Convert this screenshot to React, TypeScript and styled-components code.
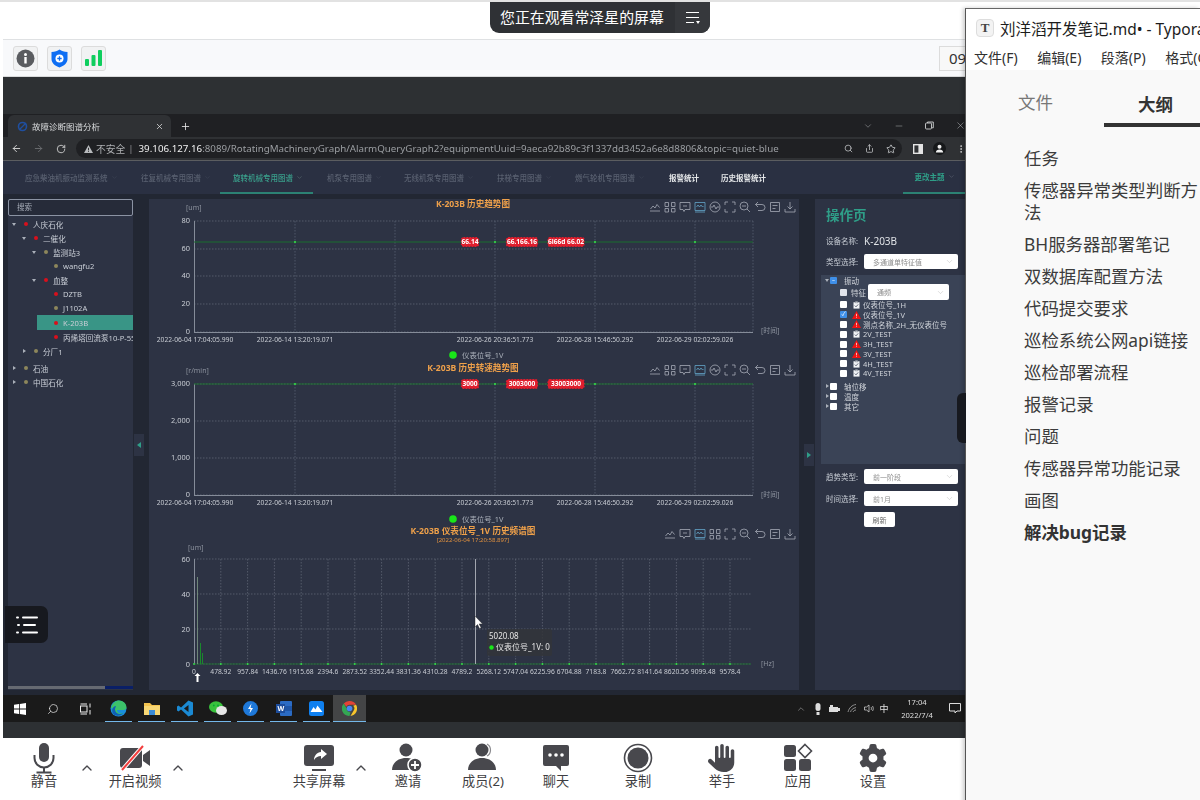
import React from "react";
import styled, { createGlobalStyle } from "styled-components";
import { FaGear, FaHand } from "react-icons/fa6";
import { ArrowLeft, ArrowRight, RotateCw, Search, Share, Star, ChevronDown, ChevronUp, Minus, X, Plus, MoreVertical } from "lucide-react";

const Global = createGlobalStyle`
  html, body { margin: 0; padding: 0; width: 1200px; height: 800px; overflow: hidden; background: #fff; }
  #root { width: 1200px; height: 800px; }
  * { box-sizing: border-box; }
  body { font-family: "Noto Sans", "Noto Sans CJK SC", sans-serif; }
`;

const Page = styled.div`
  position: relative; display: flex; width: 1200px; height: 800px; overflow: hidden;
  border-top: 2px solid #e2e2e2; background: #fff; color: #333;
`;
const Meeting = styled.div`
  width: 966px; height: 798px; display: flex; flex-direction: column; padding-left: 3px; flex: none;
`;
const TopBlank = styled.div`height: 38px; background: #fff; border-bottom: 1px solid #dfe1e3; flex: none;`;
const ControlBar = styled.div`
  height: 37px; flex: none; display: flex; align-items: center; gap: 9px; padding-left: 10px;
  background: #f8f9fb; overflow: hidden; border-bottom: 1px solid #d9dadb;
`;
const StatusBtn = styled.div`
  width: 25px; height: 25px; border: 1px solid #dcdcdc; border-radius: 3px; background: #f1f2f3;
  display: flex; align-items: center; justify-content: center;
`;
const TimeBox = styled.div`
  margin-left: auto; width: 27px; height: 25px; border: 1px solid #dcdcdc; border-right: 0; background: #f8f8f8;
  font-size: 15px; line-height: 23px; padding-left: 9px; color: #333; white-space: nowrap; overflow: hidden;
`;
const Remote = styled.div`
  flex: 1; background: #2d3033; padding-top: 37px; display: flex; flex-direction: column; min-height: 0; overflow: hidden; filter: blur(0.25px);
`;
const TabStrip = styled.div`height: 23px; background: #1f2023; display: flex; align-items: flex-end; flex: none; padding-left: 5px; color: #e8e8e8;`;
const BrowserTab = styled.div`
  width: 163px; height: 22px; background: #2f3134; border-radius: 6px 6px 0 0; display: flex; align-items: center;
  padding: 0 7px 0 9px; font-size: 8.5px; color: #d8dadc; flex: none;
`;
const TabTitle = styled.span`margin-left: 4px; flex: 1; white-space: nowrap;`;
const NewTab = styled.div`width: 28px; height: 22px; display: flex; align-items: center; justify-content: center;`;
const WinControls = styled.div`margin-left: auto; display: flex; gap: 20px; height: 23px; align-items: center; color: #cfd1d3;`;
const WinBtn = styled.div`width: 11px; display: flex; justify-content: center;`;
const AddressBar = styled.div`
  height: 24px; background: #2f3134; display: flex; align-items: center; flex: none; color: #c8cacc; border-bottom: 1px solid #5b5d60;
`;
const NavBtn = styled.div<{ $first?: boolean }>`width: 22px; margin-left: ${(p) => (p.$first ? "3px" : "0")}; display: flex; justify-content: center;`;
const Omnibox = styled.div`
  width: 827px; height: 19px; margin-left: 4px; background: #1f2023; border-radius: 10px; display: flex; align-items: center;
  padding: 0 5px 0 8px; font-size: 9.75px; white-space: nowrap; overflow: hidden; color: #9b9ea2;
`;
const UnsafeText = styled.span`margin-left: 3px; color: #aeb0b3;`;
const UnsafeBar = styled.span`margin: 0 5px 0 3px; color: #8a8c8f;`;
const Host = styled.span`color: #f0f0f0;`;
const OmniIcons = styled.div`margin-left: auto; display: flex; gap: 12px; padding-right: 1px; color: #c8cacc;`;
const ChromeIcons = styled.div`display: flex; align-items: center; gap: 10px; margin-left: 11px;`;
const Avatar = styled.div`width: 13px; height: 13px; border-radius: 50%; background: #16181a; display: flex; align-items: center; justify-content: center;`;
const AppNav = styled.div`
  height: 33px; background: #2a3042; display: flex; align-items: stretch; flex: none; padding-left: 19px;
`;
const NavItem = styled.div<{ $active?: boolean; $white?: boolean; $w: number }>`
  width: ${(p) => p.$w}px; flex: none; display: flex; align-items: center; gap: 3px; font-size: 7.5px; font-weight: ${(p) => (p.$white ? 700 : 500)};
  white-space: nowrap; padding-left: 3px; height: 33px;
  color: ${(p) => (p.$white ? "#e6e8ea" : p.$active ? "#3aa08c" : "#596070")};
`;
const ActiveWrap = styled.div`
  position: relative; display: flex;
  &::after { content: ""; position: absolute; left: -10px; width: 93px; bottom: 0; height: 2px; background: #2c8274; }
`;
const ThemeNav = styled.div`
  margin-left: auto; width: 63px; display: flex; align-items: center; justify-content: center; gap: 3px; font-size: 7.5px; font-weight: 600;
  color: #2f9e88; border-bottom: 2px solid #2c8274; white-space: nowrap;
`;
const Body = styled.div`
  height: 501px; flex: none; background: #222733; display: flex; padding: 5px 0 5px 5px;
`;
const Sidebar = styled.div`width: 125px; background: #2d3344; display: flex; flex-direction: column; flex: none; overflow: hidden;`;
const SearchBox = styled.div`
  height: 17px; border: 1px solid #8b93a3; border-radius: 2px; font-size: 7.5px; line-height: 15px; padding-left: 8px; color: #a5abb6; flex: none; background: #262b39;
`;
const Tree = styled.div`flex: 1; padding-top: 1px; min-height: 0;`;
const TreeRow = styled.div<{ $depth: number; $sel?: boolean; $gap?: boolean }>`
  height: ${(p) => (p.$sel ? 15 : 14)}px; margin-left: ${(p) => p.$depth * 10 - (p.$sel ? 1 : 0)}px; margin-top: ${(p) => (p.$gap ? 3 : 0)}px;
  padding-left: ${(p) => (p.$sel ? 4 : 3)}px; display: flex; align-items: center; white-space: nowrap; font-size: 7.6px; color: #c9ced6;
  background: ${(p) => (p.$sel ? "#399586" : "transparent")}; overflow: hidden;
`;
const Arrow = styled.span<{ $open?: boolean; $none?: boolean }>`
  width: 6px; height: 6px; flex: none; display: flex; align-items: center; justify-content: center;
  &::before { content: ""; display: ${(p) => (p.$none ? "none" : "block")}; border-style: solid;
    border-width: ${(p) => (p.$open ? "3px 2.2px 0 2.2px" : "2.2px 0 2.2px 3px")};
    border-color: ${(p) => (p.$open ? "#aab0ba transparent transparent transparent" : "transparent transparent transparent #aab0ba")}; }
`;
const Dot = styled.span<{ $red?: boolean }>`
  width: 4px; height: 4px; border-radius: 50%; flex: none; margin: 0 5px 0 7px; background: ${(p) => (p.$red ? "#d9101c" : "#8d875c")};
`;
const ScrollTrack = styled.div`height: 3px; display: flex; margin-bottom: 1px; flex: none; background: #0a1f66;`;
const ScrollThumb = styled.div`width: 97px; background: #666a72;`;
const CollapseHandle = styled.div<{ $top: number; $ml: number; $mr: number }>`
  width: 10px; height: 22px; margin: ${(p) => p.$top}px ${(p) => p.$mr}px 0 ${(p) => p.$ml}px; background: #2d3344; flex: none;
  display: flex; align-items: center; justify-content: center;
`;
const ChartPanel = styled.div`width: 650px; background: #2d3344; flex: none; display: flex; flex-direction: column;`;
const ChartSvg = styled.svg`display: block; flex: none;`;
const AxisText = styled.text`font-size: 6.7px; fill: #c8ccd3;`;
const TickText = styled.text`font-size: 7.4px; fill: #c8ccd3;`;
const UnitText = styled.text`font-size: 7px; fill: #8b919d;`;
const TitleText = styled.text`font-size: 8.6px; font-weight: 700; fill: #eea04a;`;
const SubTitle = styled.text`font-size: 6px; fill: #e0903f;`;
const LegendText = styled.text`font-size: 7.4px; fill: #aab0ba;`;
const MarkText = styled.text`font-size: 6.6px; font-weight: 700; fill: #fff;`;
const TipText = styled.text`font-size: 8px; fill: #e6e6e6;`;

const OpsPanel = styled.div`width: 151px; background: #2d3344; flex: none; padding: 9px 0 0 11px; display: flex; flex-direction: column;`;
const OpsTitle = styled.div`font-size: 13.5px; line-height: 14px; height: 14px; font-weight: 700; color: #2f9e88; margin-bottom: 11px;`;
const FieldRow = styled.div<{ $mb?: number }>`display: flex; align-items: center; height: 15px; margin-bottom: ${(p) => p.$mb ?? 0}px; flex: none;`;
const FieldLabel = styled.span`width: 38px; font-size: 7.5px; color: #c6cbd3; white-space: nowrap; flex: none;`;
const FieldValue = styled.span`font-size: 10px; color: #dfe2e6;`;
const SelectBox = styled.div<{ $w: number; $h?: number; $ml?: number }>`
  width: ${(p) => p.$w}px; height: ${(p) => p.$h ?? 15}px; margin-left: ${(p) => p.$ml ?? 0}px; background: #fff; border-radius: 2px; display: flex; align-items: center; justify-content: space-between;
  padding: 0 4px 0 9px; font-size: 7px; color: #8e8e8e; flex: none;
`;
const CheckPanel = styled.div`
  height: 189px; margin: 6px 0 5px -5px; background: #3a4356; padding-left: 3px; flex: none; font-size: 7.5px; color: #c6cbd3; white-space: nowrap; overflow: hidden;
`;
const CheckRow = styled.div<{ $indent?: number; $h?: number; $mt?: number }>`
  display: flex; align-items: center; height: ${(p) => p.$h ?? 10}px; margin-top: ${(p) => p.$mt ?? 0}px; padding-left: ${(p) => p.$indent ?? 0}px;
`;
const Box = styled.span<{ $state?: "on" | "half" | "off" | "dis" }>`
  width: 7px; height: 7px; flex: none; border-radius: 1px; display: flex; align-items: center; justify-content: center; font-size: 6px; line-height: 7px; color: #fff;
  background: ${(p) => (p.$state === "on" || p.$state === "half" ? "#3f8fe8" : p.$state === "dis" ? "#dfe3ea" : "#fff")};
`;
const CheckLabel = styled.span<{ $ml: number }>`margin-left: ${(p) => p.$ml}px; color: #d0d4da;`;
const ChanIcon = styled.span`width: 9px; height: 9px; margin-left: 5px; flex: none; display: flex; align-items: center; justify-content: center;`;
const RefreshBtn = styled.div`
  width: 31px; height: 15px; margin: 6px 0 0 38px; background: #fff; border-radius: 2px; font-size: 7px; color: #666; display: flex; align-items: center; justify-content: center;
`;
const Taskbar = styled.div`height: 27px; flex: none; background: #1a1a1a; display: flex; align-items: stretch; color: #e4e4e4;`;
const TaskSlot = styled.div<{ $active?: boolean; $open?: boolean }>`
  width: 33px; position: relative; flex: none; display: flex; align-items: center; justify-content: center;
  background: ${(p) => (p.$active ? "#444546" : "transparent")};
  &::after { content: ""; display: ${(p) => (p.$open ? "block" : "none")}; position: absolute; bottom: 0; height: 1px; left: ${(p) => (p.$active ? 0 : 3)}px; right: ${(p) => (p.$active ? 0 : 3)}px; background: #74b8ea; }
`;
const TaskSearch = styled(Search)`transform: scaleX(-1);`;
const Tray = styled.div`margin-left: auto; display: flex; align-items: center;`;
const TraySlot = styled.div<{ $w?: number }>`width: ${(p) => p.$w ?? 17}px; display: flex; justify-content: center; align-items: center; font-size: 9px; color: #e2e2e2;`;
const Clock = styled.div`width: 52px; text-align: center; font-size: 7.6px; line-height: 13px; color: #dedede;`;
const BottomGap = styled.div`height: 16px; flex: none;`;
const BottomBar = styled.div`height: 62px; flex: none; background: #fff; display: flex; align-items: flex-start; padding-top: 4px; margin-left: -3px; padding-left: 14px;`;
const ToolItem = styled.div<{ $w: number; $ml: number }>`
  width: ${(p) => p.$w}px; margin-left: ${(p) => p.$ml}px; flex: none; display: flex; flex-direction: column; align-items: center; white-space: nowrap;
  font-size: 13.2px; line-height: 16px; color: #3e3e42;
`;
const ToolIcon = styled.div`height: 32px; display: flex; align-items: center; justify-content: center; margin-bottom: -1px; color: #48484d;`;
const ToolCaret = styled.div<{ $ml: number }>`width: 16px; margin: 17px 0 0 ${(p) => p.$ml}px; flex: none; color: #48484d; display: flex; justify-content: center;`;

const Typora = styled.div`
  width: 235px; height: 800px; margin: 6px 0 0 -1px; border-left: 1px solid #555; border-top: 1px solid #666; background: #fff; flex: none; display: flex; flex-direction: column;
  box-shadow: -2px 0 4px rgba(0,0,0,.2); overflow: hidden; position: relative;
`;
const TyTitleBar = styled.div`height: 38px; display: flex; align-items: center; padding-left: 10px; flex: none; white-space: nowrap; font-size: 15.5px; color: #1c1c1c;`;
const TyLogo = styled.div`
  width: 18px; height: 18px; border: 1px solid #ddd; border-radius: 4px; background: #f3f3f3; margin-right: 6px; flex: none; font-family: "Liberation Serif", serif; font-weight: 700;
  font-size: 13px; line-height: 16px; text-align: center; color: #444;
`;
const TyMenu = styled.div`height: 23px; display: flex; gap: 19.5px; padding-left: 8px; flex: none; white-space: nowrap; font-size: 14px; line-height: 22px; color: #303030; background: #fff;`;
const TyBody = styled.div`flex: 1; background: #f9f9f9;`;
const TyTabs = styled.div`height: 57px; display: flex; position: relative;`;
const TyTab = styled.div<{ $active?: boolean }>`
  width: ${(p) => (p.$active ? 96 : 138)}px; height: 57px; padding-top: ${(p) => (p.$active ? 22 : 20)}px; padding-left: ${(p) => (p.$active ? 34 : 52)}px; font-size: 17.5px; line-height: 24px;
  color: ${(p) => (p.$active ? "#333" : "#777")}; font-weight: ${(p) => (p.$active ? 700 : 400)};
  border-bottom: ${(p) => (p.$active ? "4px solid #333" : "0")};
`;
const Outline = styled.div`padding: 20px 0 0 58px; width: 234px;`;
const OutlineItem = styled.div<{ $bold?: boolean }>`
  font-size: 17.4px; line-height: 22px; margin-bottom: 10px; color: ${(p) => (p.$bold ? "#333" : "#3c3c3c")}; font-weight: ${(p) => (p.$bold ? 700 : 400)};
`;
const Banner = styled.div`
  position: absolute; left: 490px; top: -1px; width: 220px; height: 32px; background: #2f3135; border-radius: 0 0 9px 9px; display: flex; color: #fff; font-size: 14.9px; overflow: hidden; z-index: 3;
`;
const BannerText = styled.div`width: 185px; padding-left: 10px; line-height: 33px; white-space: nowrap;`;
const BannerMenu = styled.div`flex: 1; background: #36383c; display: flex; align-items: center; justify-content: center;`;
const FloatBtn = styled.div`
  position: absolute; left: 5px; top: 604px; width: 43px; height: 37px; background: #17191f; border-radius: 0 7px 7px 0; display: flex; align-items: center; justify-content: center; z-index: 2;
`;
const SideGrip = styled.div`position: absolute; left: 957px; top: 391px; width: 9px; height: 50px; background: #17191f; border-radius: 6px 0 0 6px; z-index: 2;`;

const TOOL_GLYPHS: Record<string, string> = {
  line: "M1 10h10M1.5 8l2.5-3 2 2 2-3.5 2.5 3",
  swap: "M1 1.5h3.5v4H1zM7.5 1.5H11v4H7.5zM1 7.5h3.5v3.5H1zM7.5 7.5H11v3.5H7.5z",
  note: "M1 1.5h10v7H6l-1 2-1-2H1zM4 5h4",
  wave: "M1 1.5h10v8H1zM2.5 6l1.5-2 1.5 2 1.5-2 1.5 2 1-1M1 11h10",
  dial: "M6 1a5 5 0 1 1 0 10a5 5 0 1 1 0-10M2 6h2l1-2 2 4 1-2h2",
  full: "M1 4V1h3M8 1h3v3M11 8v3H8M4 11H1V8",
  zoom: "M5 1a4 4 0 1 1 0 8a4 4 0 1 1 0-8M8 8l3 3M3 5h4",
  back: "M4 1L1.5 3.5 4 6M1.5 3.5H8a3 3 0 0 1 0 6H4",
  box: "M1.5 1.5h9v9h-9zM3.5 4.5h5M3.5 7.5h3",
  down: "M6 1v7M3.5 5.5L6 8l2.5-2.5M1 8v3h10V8",
};
function Toolbox({ y, names, start }: { y: number; names: string[]; start: number }) {
  return (
    <g fill="none" stroke="#a4aab5" strokeWidth={0.8}>
      {names.map((n, i) => (
        <path key={i} transform={`translate(${start + i * 15 - 6} ${y - 6})`} d={TOOL_GLYPHS[n]} stroke={n === "wave" ? "#62a4c8" : undefined} />
      ))}
    </g>
  );
}
const TB_A = ["line", "swap", "note", "wave", "dial", "full", "zoom", "back", "box", "down"];
const TB_B = ["line", "note", "wave", "swap", "full", "zoom", "back", "box", "down"];

function Mark({ x, y, w, text }: { x: number; y: number; w: number; text: string }) {
  return (
    <g>
      <rect x={x - w / 2} y={y - 4.5} width={w} height={9} rx={2} fill="#e01e2d" stroke="#e01e2d" strokeWidth={1.2} strokeDasharray="1.5 1.5" />
      <MarkText x={x} y={y + 2.4} textAnchor="middle">{text}</MarkText>
    </g>
  );
}

const TREND_LABELS: [number, string][] = [
  [195, "2022-06-04 17:04:05.990"],
  [295, "2022-06-14 13:20:19.071"],
  [495, "2022-06-26 20:36:51.773"],
  [595, "2022-06-28 15:46:50.292"],
  [695, "2022-06-29 02:02:59.026"],
];
const GRIDX = [295, 395, 495, 595, 695, 753];

function TrendChart(props: {
  top: number; height: number; title: string; titleY: number; unit: string; unitY: number;
  ticks: [number, string][]; lineY: number; bottom: number; toolY: number; marks: [number, number, string][]; legendY: number; timeY: number;
}) {
  const { top, height, title, titleY, unit, unitY, ticks, lineY, bottom, toolY, marks, legendY, timeY } = props;
  return (
    <ChartSvg width={650} height={height} viewBox={`149 ${top} 650 ${height}`}>
      <TitleText x={473} y={titleY + 3} textAnchor="middle">{title}</TitleText>
      <Toolbox y={toolY} names={TB_A} start={655} />
      <UnitText x={186} y={unitY + 2}>{unit}</UnitText>
      {ticks.map(([y, t]) => (
        <g key={t}>
          <line x1={194} x2={753} y1={y} y2={y} stroke="#5d6474" strokeWidth={0.8} strokeDasharray="1.5 1.5" />
          <TickText x={190} y={y + 2} textAnchor="end">{t}</TickText>
        </g>
      ))}
      {GRIDX.map((x) => (
        <line key={x} x1={x} x2={x} y1={ticks[0][0]} y2={bottom} stroke="#566072" strokeWidth={0.8} strokeDasharray="1.5 1.5" />
      ))}
      <line x1={194.5} x2={194.5} y1={ticks[0][0]} y2={bottom} stroke="#858c99" />
      <line x1={194} x2={753} y1={bottom + 0.5} y2={bottom + 0.5} stroke="#858c99" />
      <line x1={194} x2={753} y1={lineY} y2={lineY} stroke="#1b6e2e" strokeWidth={1.2} />
      {[295, 495, 595, 695].map((x) => <circle key={x} cx={x} cy={lineY} r={1} fill="#37e24a" />)}
      {marks.map(([x, w, t]) => <Mark key={x} x={x} y={lineY} w={w} text={t} />)}
      {TREND_LABELS.map(([x, t]) => <AxisText key={x} x={x} y={bottom + 9.5} textAnchor="middle">{t}</AxisText>)}
      <UnitText x={761} y={timeY + 2.5}>[时间]</UnitText>
      <circle cx={453} cy={legendY} r={3.8} fill="#19e619" />
      <LegendText x={462} y={legendY + 2.5}>仪表位号_1V</LegendText>
    </ChartSvg>
  );
}

const SPEC = ["478.92","957.84","1436.76","1915.68","2394.6","2873.52","3352.44","3831.36","4310.28","4789.2","5268.12","5747.04","6225.96","6704.88","7183.8","7662.72","8141.64","8620.56","9099.48","9578.4"];
function SpectrumChart() {
  const xs = Array.from({ length: 21 }, (_, i) => 194 + i * 26.8);
  return (
    <ChartSvg width={650} height={165} viewBox="149 525 650 165">
      <TitleText x={473} y={534.5} textAnchor="middle">K-203B 仪表位号_1V 历史频谱图</TitleText>
      <SubTitle x={473} y={542.5} textAnchor="middle">[2022-06-04 17:20:58.897]</SubTitle>
      <Toolbox y={535} names={TB_B} start={670} />
      <UnitText x={188} y={551}>[um]</UnitText>
      {([[560,"60"],[595,"40"],[630,"20"],[665,"0"]] as [number,string][]).map(([y,t]) => (
        <g key={t}>
          <line x1={194} x2={751} y1={y} y2={y} stroke="#5d6474" strokeWidth={0.8} strokeDasharray="1.5 1.5" />
          <TickText x={190} y={y + 2.5} textAnchor="end">{t}</TickText>
        </g>
      ))}
      {xs.slice(1).map((x) => <line key={x} x1={x} x2={x} y1={560} y2={665} stroke="#5d6474" strokeWidth={0.8} strokeDasharray="1.5 1.5" />)}
      <line x1={194.5} x2={194.5} y1={560} y2={665} stroke="#858c99" />
      <line x1={194} x2={751} y1={665} y2={665} stroke="#1c6a30" strokeWidth={1.2} />
      {xs.map((x) => <circle key={x} cx={x} cy={665} r={0.9} fill="#37e24a" />)}
      <line x1={197.5} x2={197.5} y1={578} y2={665} stroke="#7f9a85" strokeWidth={0.8} />
      <line x1={200.5} x2={200.5} y1={644} y2={665} stroke="#1a8a2c" />
      <line x1={202.5} x2={202.5} y1={654} y2={665} stroke="#1a8a2c" />
      <AxisText x={194} y={675} textAnchor="middle">0</AxisText>
      {SPEC.map((t, i) => <AxisText key={t} x={xs[i + 1]} y={675} textAnchor="middle">{t}</AxisText>)}
      <UnitText x={761} y={667}>[Hz]</UnitText>
      <line x1={475.5} x2={475.5} y1={560} y2={665} stroke="#c0c4ca" strokeWidth={0.8} />
      <path d="M475 617v11l2.500-2.500 2 4 1.600-.8-2-3.800h3.400z" fill="#fff" stroke="#222" strokeWidth={0.4} />
      <rect x={487} y={630} width={65} height={27} rx={2} fill="#32353a" opacity={0.85} />
      <TipText x={489} y={640}>5020.08</TipText>
      <circle cx={491.5} cy={648.5} r={2.2} fill="#19e619" />
      <TipText x={496} y={651}>仪表位号_1V: 0</TipText>
      <path d="M197.5 674l-3 3h2v6h2v-6h2z" fill="#fff" />
    </ChartSvg>
  );
}

const TREE: { d: number; t: string; open?: boolean; leaf?: boolean; red?: boolean; sel?: boolean; gap?: boolean }[] = [
  { d: 0, t: "人庆石化", open: true, red: true },
  { d: 1, t: "二催化", open: true, red: true },
  { d: 2, t: "监测站3", open: true },
  { d: 3, t: "wangfu2", leaf: true },
  { d: 2, t: "血整", open: true, red: true },
  { d: 3, t: "DZTB", leaf: true, red: true },
  { d: 3, t: "J1102A", leaf: true },
  { d: 3, t: "K-203B", leaf: true, red: true, sel: true },
  { d: 3, t: "丙烯塔回流泵10-P-557", leaf: true, red: true },
  { d: 1, t: "分厂1" },
  { d: 0, t: "石油", gap: true },
  { d: 0, t: "中国石化" },
];

const Warn = () => (
  <svg width="9" height="8" viewBox="0 0 9 8"><path d="M4.500 0L9 8H0z" fill="#f01414" /><path d="M4.500 2.800v2.400M4.500 5.800v.9" stroke="#fff" strokeWidth=".7" /></svg>
);
const Clip = () => (
  <svg width="7" height="8" viewBox="0 0 7 8"><path d="M.5 1.200h6v6.400h-6z" fill="#f2f4f7" /><path d="M2.200.4h2.600v1.400H2.200z" fill="#f2f4f7" stroke="#3a4356" strokeWidth=".4" /><path d="M1.800 4.600l1.200 1.200L5.200 3.400" stroke="#3a4356" fill="none" strokeWidth=".8" /></svg>
);
const CHANNELS: [string, "warn" | "clip", boolean][] = [
  ["仪表位号_1H", "clip", false], ["仪表位号_1V", "warn", true], ["测点名称_2H_无仪表位号", "warn", false], ["2V_TEST", "clip", false],
  ["3H_TEST", "warn", false], ["3V_TEST", "warn", false], ["4H_TEST", "clip", false], ["4V_TEST", "clip", false],
];
const SmallChevron = () => <ChevronDown size={9} color="#b8b8b8" strokeWidth={1.2} />;
const NavChevron = ({ c }: { c?: string }) => <ChevronDown size={7} color={c ?? "#464c5c"} strokeWidth={1.4} />;

const MicIcon = () => (
  <svg width="32" height="32" viewBox="0 0 32 32"><rect x="11" y="1" width="10" height="19" rx="5" fill="#48484d" /><path d="M6.500 13v3a9.500 9.500 0 0 0 19 0v-3" fill="none" stroke="#48484d" strokeWidth="2" /><path d="M16 26v4M8.500 30.500h15" stroke="#48484d" strokeWidth="2" /></svg>
);
const VideoOffIcon = () => (
  <svg width="32" height="26" viewBox="0 0 32 26"><rect x="1" y="3" width="22" height="20" rx="3" fill="#48484d" /><path d="M24 10l7-5v16l-7-5z" fill="#48484d" /><path d="M3 25L24 1" stroke="#fff" strokeWidth="4" /><path d="M3 25L24 1" stroke="#f23d3d" strokeWidth="2" /></svg>
);
const ShareIcon = () => (
  <svg width="32" height="28" viewBox="0 0 32 28"><rect x="1" y="1" width="30" height="21" rx="3" fill="#48484d" /><path d="M18 5l6 5-6 5v-3c-3 0-5 1-7 4 0-4 3-8 7-8z" fill="#fff" /><rect x="9" y="25" width="14" height="2" fill="#48484d" /></svg>
);
const InviteIcon = () => (
  <svg width="34" height="32" viewBox="0 0 34 32"><circle cx="15" cy="8" r="6.500" fill="#48484d" /><path d="M1 28c0-7 6-12 14-12 5 0 9 2 11 5v7z" fill="#48484d" /><circle cx="24" cy="23" r="7" fill="#48484d" stroke="#fff" strokeWidth="1.500" /><path d="M24 19v8M20 23h8" stroke="#fff" strokeWidth="1.800" /></svg>
);
const MembersIcon = () => (
  <svg width="32" height="32" viewBox="0 0 32 32"><circle cx="15" cy="8" r="6.500" fill="#48484d" /><path d="M20 2c2 1 3.500 3 3.500 6s-1.500 5-3.500 6" fill="none" stroke="#8a8a8e" strokeWidth="1.200" /><path d="M1 28c0-7 6-12 14-12s14 5 14 12z" fill="#48484d" /></svg>
);
const ChatIcon = () => (
  <svg width="28" height="28" viewBox="0 0 28 28"><path d="M3 1h22a2 2 0 0 1 2 2v17a2 2 0 0 1-2 2h-6v5l-5-5H3a2 2 0 0 1-2-2V3a2 2 0 0 1 2-2z" fill="#48484d" /><circle cx="8" cy="11" r="1.800" fill="#fff" /><circle cx="14" cy="11" r="1.800" fill="#fff" /><circle cx="20" cy="11" r="1.800" fill="#fff" /></svg>
);
const RecordIcon = () => (
  <svg width="30" height="30" viewBox="0 0 30 30"><circle cx="15" cy="15" r="13.500" fill="none" stroke="#48484d" strokeWidth="1.600" /><circle cx="15" cy="15" r="10.500" fill="#48484d" /></svg>
);
const AppsIcon = () => (
  <svg width="30" height="30" viewBox="0 0 30 30"><rect x="1" y="2" width="12" height="12" rx="2.500" fill="#48484d" /><rect x="1" y="16" width="12" height="12" rx="2.500" fill="#48484d" /><rect x="16" y="16" width="12" height="12" rx="2.500" fill="#48484d" /><path d="M22 1.500l6.500 6.500-6.500 6.500L15.500 8z" fill="none" stroke="#48484d" strokeWidth="1.600" /></svg>
);
const Caret = () => <ChevronUp size={18} strokeWidth={2} />;

const WinLogo = () => <svg width="12" height="12" viewBox="0 0 12 12" fill="#fff"><path d="M0 1.700l5-.7v4.600H0zM5.800.9L12 0v5.600H5.800zM0 6.400h5V11l-5-.7zM5.800 6.400H12V12l-6.200-.9z" /></svg>;
const TaskView = () => <svg width="12" height="12" viewBox="0 0 12 12" fill="none" stroke="#eee"><rect x=".5" y="3" width="6.500" height="6" /><path d="M.5 1h6.500M.5 11h6.500M10 .5v4M10 7v4.500" /></svg>;
const Edge = () => <svg width="17" height="17" viewBox="0 0 17 17"><circle cx="8.500" cy="8.500" r="8" fill="#1a8fdc" /><path d="M1 8C2 3 6 .5 9 .5c4 0 7.500 3 7.500 7 0 2-2 2.500-4 2.500H7c0 3 3 4 6 3-2 3-8 3-10-1C1 10 3 5 7 6 5 7 5 8 5 8z" fill="#3cc26a" /><path d="M5 9c0 4 4 6 8 4.500-3 3-8 3-10 0C1 10 3 6 6 6z" fill="#0f5fb5" /></svg>;
const Explorer = () => <svg width="16" height="14" viewBox="0 0 16 14"><path d="M0 1h6l2 2h8v10H0z" fill="#f3c34f" /><rect y="4" width="16" height="9" fill="#f7d775" /><rect x="5" y="8" width="6" height="5" fill="#3b8bd6" /></svg>;
const VSCode = () => <svg width="16" height="17" viewBox="0 0 16 17"><path d="M11.500.500L16 2.500v12l-4.500 2L4 9.500 1.500 11.500 0 10.500v-4L1.500 5.500 4 7.500z" fill="#1b8ad3" /><path d="M11.500 5L7 8.500l4.500 3.500z" fill="#1a1a1a" /></svg>;
const WeChat = () => <svg width="18" height="15" viewBox="0 0 18 15"><ellipse cx="7" cy="6" rx="7" ry="5.800" fill="#39c23c" /><ellipse cx="12.500" cy="9.500" rx="5.500" ry="4.500" fill="#e6e6e6" /><circle cx="4.800" cy="4.500" r=".9" fill="#0a3" /><circle cx="9" cy="4.500" r=".9" fill="#0a3" /></svg>;
const BoltApp = () => <svg width="15" height="15" viewBox="0 0 15 15"><circle cx="7.500" cy="7.500" r="7.500" fill="#1e78d8" /><path d="M8.500 2.500L5 8h2.500L6.500 12.500 10 7H7.500z" fill="#fff" /></svg>;
const Word = () => <svg width="16" height="15" viewBox="0 0 16 15"><rect x="4" width="12" height="15" rx="1" fill="#2b6bc4" /><rect x="4" y="5" width="12" height="5" fill="#1f55a6" /><rect y="3" width="9" height="9" fill="#1d4d9c" /><text x="1.500" y="10" fontSize="7" fontWeight="700" fill="#fff">W</text></svg>;
const LarkApp = () => <svg width="15" height="15" viewBox="0 0 15 15"><rect width="15" height="15" rx="2.500" fill="#0f80f0" /><path d="M1.500 11l3-5 2 2.500 2-4 5 6.500z" fill="#fff" /></svg>;
const Chrome = () => <svg width="15" height="15" viewBox="0 0 16 16"><path d="M8 0a8 8 0 0 1 7 4H8a4 4 0 0 0-3.500 2L1.900 2.600A8 8 0 0 1 8 0z" fill="#e44335" /><path d="M15 4a8 8 0 0 1-6 12l3.500-6A4 4 0 0 0 12 5z" fill="#f8c52c" /><path d="M1.900 2.600L5 8a4 4 0 0 0 4 4l-1 4A8 8 0 0 1 1.900 2.600z" fill="#34a753" /><circle cx="8" cy="8" r="3" fill="#4788f4" /></svg>;

const NAV = [
  { t: "应急柴油机振动监测系统", w: 116 }, { t: "往复机械专用图谱", w: 92 }, { t: "旋转机械专用图谱", w: 94, active: true }, { t: "机泵专用图谱", w: 77 },
  { t: "无线机泵专用图谱", w: 93 }, { t: "扶梯专用图谱", w: 78 }, { t: "燃气轮机专用图谱", w: 94 },
];
const OUTLINE = ["任务", "传感器异常类型判断方法", "BH服务器部署笔记", "双数据库配置方法", "代码提交要求", "巡检系统公网api链接", "巡检部署流程", "报警记录", "问题", "传感器异常功能记录", "画图"];

export default function App() {
  return (
    <>
      <Global />
      <Page>
        <Meeting>
          <TopBlank />
          <ControlBar>
            <StatusBtn>
              <svg width="19" height="19" viewBox="0 0 19 19"><circle cx="9.500" cy="9.500" r="9" fill="#5a5c60" /><rect x="8.300" y="8" width="2.400" height="6.500" fill="#fff" /><circle cx="9.500" cy="5.500" r="1.500" fill="#fff" /></svg>
            </StatusBtn>
            <StatusBtn>
              <svg width="17" height="19" viewBox="0 0 17 19"><path d="M8.500.5c2 1.500 4.500 2.300 8 2.500v7c0 4-3.500 7-8 8.500-4.500-1.500-8-4.500-8-8.500V3c3.500-.2 6-1 8-2.500z" fill="#0e6ef3" /><circle cx="8.500" cy="9.500" r="4" fill="#fff" /><path d="M8.500 7.300v4.400M6.300 9.500h4.400" stroke="#0e6ef3" strokeWidth="1.300" /></svg>
            </StatusBtn>
            <StatusBtn>
              <svg width="17" height="17" viewBox="0 0 17 17" fill="#0fce5e"><rect x="0" y="9" width="4" height="7" rx="1" /><rect x="6.500" y="5" width="4" height="11" rx="1" /><rect x="13" y="0" width="4" height="16" rx="1" /></svg>
            </StatusBtn>
            <TimeBox>09</TimeBox>
          </ControlBar>
          <Remote>
            <TabStrip>
              <BrowserTab>
                <svg width="11" height="11" viewBox="0 0 11 11" fill="none"><circle cx="5.500" cy="5.500" r="4" stroke="#1f4fa0" strokeWidth="1.600" /><path d="M2 9l7-7" stroke="#1f4fa0" strokeWidth="1.200" /></svg>
                <TabTitle>故障诊断图谱分析</TabTitle>
                <X size={9} strokeWidth={2} color="#e0e0e0" />
              </BrowserTab>
              <NewTab><Plus size={11} strokeWidth={1.8} /></NewTab>
              <WinControls>
                <WinBtn><ChevronDown size={10} strokeWidth={1} /></WinBtn>
                <WinBtn><Minus size={10} strokeWidth={1} /></WinBtn>
                <WinBtn>
                  <svg width="9" height="9" viewBox="0 0 9 9" fill="none" stroke="#cfd1d3" strokeWidth=".9"><rect x=".5" y="2" width="6" height="6" rx="1" /><path d="M2.500 2V1h5.800v5.800H7" /></svg>
                </WinBtn>
                <WinBtn><X size={11} strokeWidth={1} /></WinBtn>
              </WinControls>
            </TabStrip>
            <AddressBar>
              <NavBtn $first><ArrowLeft size={11} color="#d8d8d8" strokeWidth={2} /></NavBtn>
              <NavBtn><ArrowRight size={11} color="#6c6e72" strokeWidth={2} /></NavBtn>
              <NavBtn><RotateCw size={10} color="#d8d8d8" strokeWidth={2} /></NavBtn>
              <Omnibox>
                <svg width="9" height="8" viewBox="0 0 9 8"><path d="M4.500 0L9 8H0z" fill="#b8babd" /><path d="M4.500 2.800v2.400M4.500 5.800v1" stroke="#1f2023" strokeWidth=".9" /></svg>
                <UnsafeText>不安全</UnsafeText><UnsafeBar>|</UnsafeBar>
                <Host>39.106.127.16</Host>:8089/RotatingMachineryGraph/AlarmQueryGraph2?equipmentUuid=9aeca92b89c3f1337dd3452a6e8d8806&amp;topic=quiet-blue
                <OmniIcons>
                  <Search size={9} /><Share size={9} /><Star size={10} />
                </OmniIcons>
              </Omnibox>
              <ChromeIcons>
                <svg width="10" height="10" viewBox="0 0 10 10"><rect width="10" height="10" fill="#e4e4e4" /><rect x="1.400" y="1.400" width="4" height="7.200" fill="#2f3134" /></svg>
                <Avatar><svg width="9" height="9" viewBox="0 0 9 9" fill="#eee"><circle cx="4.500" cy="2.800" r="2" /><path d="M.8 8.500c0-2 1.700-3 3.700-3s3.700 1 3.700 3z" /></svg></Avatar>
                <MoreVertical size={10} color="#dcdcdc" />
              </ChromeIcons>
            </AddressBar>
            <AppNav>
              {NAV.map((n) =>
                n.active ? (
                  <ActiveWrap key={n.t}>
                    <NavItem $w={n.w} $active>{n.t}<NavChevron c="#6f8a86" /></NavItem>
                  </ActiveWrap>
                ) : (
                  <NavItem key={n.t} $w={n.w}>{n.t}<NavChevron /></NavItem>
                )
              )}
              <NavItem $w={52} $white>报警统计</NavItem>
              <NavItem $w={60} $white>历史报警统计</NavItem>
              <ThemeNav>更改主题<NavChevron c="#6f7685" /></ThemeNav>
            </AppNav>
            <Body>
              <Sidebar>
                <SearchBox>搜索</SearchBox>
                <Tree>
                  {TREE.map((r) => (
                    <TreeRow key={r.t} $depth={r.d} $sel={r.sel} $gap={r.gap}>
                      <Arrow $open={r.open} $none={r.leaf} />
                      <Dot $red={r.red} />
                      {r.t}
                    </TreeRow>
                  ))}
                </Tree>
                <ScrollTrack><ScrollThumb /></ScrollTrack>
              </Sidebar>
              <CollapseHandle $top={235} $ml={1} $mr={5}>
                <svg width="4" height="6" viewBox="0 0 4 6"><path d="M4 0v6L0 3z" fill="#2f9e88" /></svg>
              </CollapseHandle>
              <ChartPanel>
                <TrendChart top={200} height={162} title="K-203B 历史趋势图" titleY={205} unit="[um]" unitY={209} ticks={[[222,"80"],[250,"60"],[277,"40"],[305,"20"],[333,"0"]]} lineY={243} bottom={333} toolY={208}
                  marks={[[470,17,"66.14"],[522,31,"66.166.16"],[566,36,"6i66d 66.02"]]} legendY={356} timeY={331} />
                <TrendChart top={362} height={163} title="K-203B 历史转速趋势图" titleY={369} unit="[r/min]" unitY={372} ticks={[[385,"3,000"],[422,"2,000"],[459,"1,000"],[496,"0"]]} lineY={385} bottom={496} toolY={371}
                  marks={[[470,17,"3000"],[522,31,"3003000"],[566,36,"33003000"]]} legendY={520} timeY={495} />
                <SpectrumChart />
              </ChartPanel>
              <CollapseHandle $top={245} $ml={5} $mr={1}>
                <svg width="4" height="6" viewBox="0 0 4 6"><path d="M0 0v6l4-3z" fill="#2f9e88" /></svg>
              </CollapseHandle>
              <OpsPanel>
                <OpsTitle>操作页</OpsTitle>
                <FieldRow $mb={6}><FieldLabel>设备名称:</FieldLabel><FieldValue>K-203B</FieldValue></FieldRow>
                <FieldRow><FieldLabel>类型选择:</FieldLabel><SelectBox $w={94}>多通道单特征值<SmallChevron /></SelectBox></FieldRow>
                <CheckPanel>
                  <CheckRow>
                    <Arrow $open /><Box $state="half">–</Box><CheckLabel $ml={7}>振动</CheckLabel>
                  </CheckRow>
                  <CheckRow $indent={16} $h={16} $mt={-1}>
                    <Box $state="dis" /><CheckLabel $ml={4}>特征</CheckLabel>
                    <SelectBox $w={81} $h={16} $ml={2}>通频<SmallChevron /></SelectBox>
                  </CheckRow>
                  {CHANNELS.map(([t, k, on]) => (
                    <CheckRow key={t} $indent={16} $h={9.8}>
                      <Box $state={on ? "on" : "off"}>{on ? "✓" : ""}</Box>
                      <ChanIcon>{k === "warn" ? <Warn /> : <Clip />}</ChanIcon>
                      <CheckLabel $ml={2}>{t}</CheckLabel>
                    </CheckRow>
                  ))}
                  {["轴位移", "温度", "其它"].map((t, i) => (
                    <CheckRow key={t} $mt={i === 0 ? 3 : 0}>
                      <Arrow /><Box $state="off" /><CheckLabel $ml={7}>{t}</CheckLabel>
                    </CheckRow>
                  ))}
                </CheckPanel>
                <FieldRow $mb={7}><FieldLabel>趋势类型:</FieldLabel><SelectBox $w={94}>前一阶段<SmallChevron /></SelectBox></FieldRow>
                <FieldRow><FieldLabel>时间选择:</FieldLabel><SelectBox $w={94}>前1月<SmallChevron /></SelectBox></FieldRow>
                <RefreshBtn>刷新</RefreshBtn>
              </OpsPanel>
            </Body>
            <Taskbar>
              <TaskSlot><WinLogo /></TaskSlot>
              <TaskSlot><TaskSearch size={12} color="#eee" strokeWidth={1.4} /></TaskSlot>
              <TaskSlot><TaskView /></TaskSlot>
              <TaskSlot $open><Edge /></TaskSlot>
              <TaskSlot $open><Explorer /></TaskSlot>
              <TaskSlot $open><VSCode /></TaskSlot>
              <TaskSlot $open><WeChat /></TaskSlot>
              <TaskSlot $open><BoltApp /></TaskSlot>
              <TaskSlot $open><Word /></TaskSlot>
              <TaskSlot $open><LarkApp /></TaskSlot>
              <TaskSlot $open $active><Chrome /></TaskSlot>
              <Tray>
                <TraySlot><ChevronUp size={10} strokeWidth={1} /></TraySlot>
                <TraySlot><svg width="8" height="12" viewBox="0 0 8 12" fill="#ddd"><rect x="1.500" width="5" height="8" rx="2.500" /><rect x="2.500" y="9" width="3" height="3" /></svg></TraySlot>
                <TraySlot><svg width="11" height="8" viewBox="0 0 11 8" fill="#ddd"><rect y="2" width="9" height="5" /><rect x="9" y="3" width="2" height="3" /><rect x="1" width="3" height="2" /></svg></TraySlot>
                <TraySlot><svg width="10" height="9" viewBox="0 0 10 9" fill="none" stroke="#aaa" strokeWidth=".8"><path d="M1 8C2 4 5 1 9 .5M3.500 8C4 6 6 4 9 3.500M6 8c.5-1 1.500-2 3-2" /></svg></TraySlot>
                <TraySlot><svg width="10" height="9" viewBox="0 0 10 9" fill="none" stroke="#ccc" strokeWidth=".8"><path d="M.5 3h2L5 1v7L2.500 6h-2zM7 3c.6.8.6 2.200 0 3M8.500 2c1 1.500 1 3.500 0 5" /></svg></TraySlot>
                <TraySlot $w={14}>中</TraySlot>
                <Clock>17:04<br />2022/7/4</Clock>
                <TraySlot $w={23}><svg width="12" height="11" viewBox="0 0 12 11" fill="none" stroke="#ddd"><path d="M.5.5h11v7.500H8L6 10V8H.5z" /></svg></TraySlot>
              </Tray>
            </Taskbar>
            <BottomGap />
          </Remote>
          <BottomBar>
            <ToolItem $w={60} $ml={0}><ToolIcon><MicIcon /></ToolIcon>静音</ToolItem>
            <ToolCaret $ml={5}><Caret /></ToolCaret>
            <ToolItem $w={64} $ml={8}><ToolIcon><VideoOffIcon /></ToolIcon>开启视频</ToolItem>
            <ToolCaret $ml={3}><Caret /></ToolCaret>
            <ToolItem $w={64} $ml={101}><ToolIcon><ShareIcon /></ToolIcon>共享屏幕</ToolItem>
            <ToolCaret $ml={2}><Caret /></ToolCaret>
            <ToolItem $w={50} $ml={14}><ToolIcon><InviteIcon /></ToolIcon>邀请</ToolItem>
            <ToolItem $w={50} $ml={25}><ToolIcon><MembersIcon /></ToolIcon>成员(2)</ToolItem>
            <ToolItem $w={50} $ml={23}><ToolIcon><ChatIcon /></ToolIcon>聊天</ToolItem>
            <ToolItem $w={50} $ml={32}><ToolIcon><RecordIcon /></ToolIcon>录制</ToolItem>
            <ToolItem $w={50} $ml={34}><ToolIcon><FaHand size={28} /></ToolIcon>举手</ToolItem>
            <ToolItem $w={50} $ml={26}><ToolIcon><AppsIcon /></ToolIcon>应用</ToolItem>
            <ToolItem $w={50} $ml={25}><ToolIcon><FaGear size={28} /></ToolIcon>设置</ToolItem>
          </BottomBar>
        </Meeting>
        <Typora>
          <TyTitleBar><TyLogo>T</TyLogo>刘洋滔开发笔记.md• - Typora</TyTitleBar>
          <TyMenu><span>文件(F)</span><span>编辑(E)</span><span>段落(P)</span><span>格式(O)</span></TyMenu>
          <TyBody>
            <TyTabs>
              <TyTab>文件</TyTab>
              <TyTab $active>大纲</TyTab>
            </TyTabs>
            <Outline>
              {OUTLINE.map((t) => <OutlineItem key={t}>{t}</OutlineItem>)}
              <OutlineItem $bold>解决bug记录</OutlineItem>
            </Outline>
          </TyBody>
        </Typora>
        <Banner>
          <BannerText>您正在观看常泽星的屏幕</BannerText>
          <BannerMenu>
            <svg width="15" height="13" viewBox="0 0 15 13" fill="none" stroke="#fff" strokeWidth="1"><path d="M1 1.500h13M1 6.500h13M1 11.500h8" /><path d="M11 10h4l-2 3z" fill="#fff" stroke="none" /></svg>
          </BannerMenu>
        </Banner>
        <FloatBtn>
          <svg width="22" height="20" viewBox="0 0 22 20" fill="#fff"><rect x="0" y="1.500" width="3" height="2" rx="1" /><rect x="6" y="1.500" width="16" height="2" rx="1" /><rect x="1" y="9" width="3" height="2" rx="1" /><rect x="7" y="9" width="13" height="2" rx="1" /><rect x="0" y="16.500" width="3" height="2" rx="1" /><rect x="6" y="16.500" width="16" height="2" rx="1" /></svg>
        </FloatBtn>
        <SideGrip />
      </Page>
    </>
  );
}
